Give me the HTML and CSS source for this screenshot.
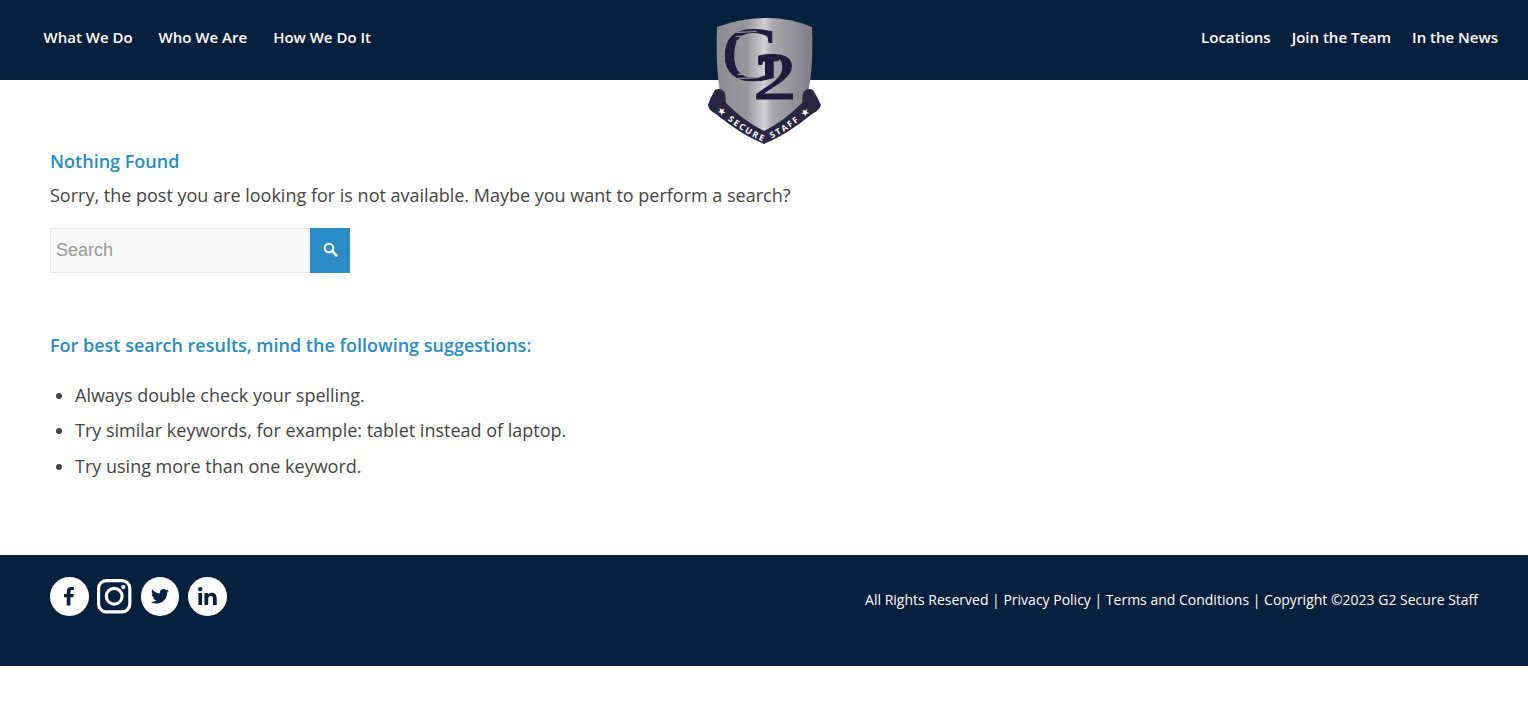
FILE: index.html
```html
<!DOCTYPE html>
<html lang="en">
<head>
<meta charset="utf-8">
<title>Nothing Found | G2 Secure Staff</title>
<link rel="stylesheet" href="styles.css">
</head>
<body>
<header class="site-header">
  <nav class="nav nav-left">
    <a href="#">What We Do</a>
    <a href="#">Who We Are</a>
    <a href="#">How We Do It</a>
  </nav>
  <nav class="nav nav-right">
    <a href="#">Locations</a>
    <a href="#">Join the Team</a>
    <a href="#">In the News</a>
  </nav>
  <a class="logo" href="#" aria-label="G2 Secure Staff">
    <svg width="120" height="134" viewBox="0 0 120 134">
      <defs>
        <linearGradient id="steel" x1="0" x2="1" y1="0" y2="0">
          <stop offset="0" stop-color="#8c8b91"/>
          <stop offset="0.32" stop-color="#98979c"/>
          <stop offset="0.5" stop-color="#d2d2d5"/>
          <stop offset="0.58" stop-color="#a9a8ad"/>
          <stop offset="1" stop-color="#7f7e85"/>
        </linearGradient>
        <pattern id="stripes-g" width="120" height="4.200" patternUnits="userSpaceOnUse" patternTransform="rotate(-3)">
          <rect width="120" height="4.200" fill="#1f1b3d"/>
          <rect x="15" y="3" width="20" height="1.200" fill="#96959b"/>
        </pattern>
        <pattern id="stripes-2" width="120" height="4.200" patternUnits="userSpaceOnUse" patternTransform="rotate(-3)">
          <rect width="120" height="4.200" fill="#1f1b3d"/>
          <rect x="74" y="3" width="24" height="1.200" fill="#a2a1a7"/>
        </pattern>
        <path id="arc" d="M12 96 Q36 118 60 128 Q84 118 108 96"/>
      </defs>
      <path fill="url(#steel)" d="M13 13 Q37 4 63 4 Q87 4 108 13 C109 40 108 60 104 78 Q98 100 60 124 Q22 100 16 78 C13 60 12 40 13 13 Z"/>
      <text class="logo-g" transform="translate(18 66) scale(1.060 1)" fill="url(#stripes-g)" stroke="url(#stripes-g)">G</text>
      <text class="logo-2" transform="translate(49 85) scale(1.300 1)" fill="url(#stripes-2)" stroke="url(#stripes-2)">2</text>
      <path class="ribbon" d="M11 76 Q17 73 21 79 L22 89 Q40 107 60 117 Q80 107 98 89 L99 79 Q103 73 109 76 Q114 84 117 91 Q115 97 108 100 Q84 120 60 130 Q36 120 12 100 Q5 97 4 91 Q6 84 11 76 Z"/>
      <text class="logo-type"><textPath href="#arc" startOffset="50%" text-anchor="middle">★ SECURE&#160;&#160;STAFF ★</textPath></text>
    </svg>
  </a>
</header>

<main class="content">
  <h1 class="title">Nothing Found</h1>
  <p class="lead">Sorry, the post you are looking for is not available. Maybe you want to perform a search?</p>
  <form class="search">
    <input class="search-input" type="text" placeholder="Search">
    <button class="search-btn" type="button" aria-label="Search">
      <svg width="15" height="15" viewBox="0 0 14 14"><circle cx="5.600" cy="5.600" r="4" fill="none" stroke="#fff" stroke-width="2"/><path d="M8.600 8.600 L12.600 12.600" stroke="#fff" stroke-width="2.400" stroke-linecap="round"/></svg>
    </button>
  </form>
  <h2 class="title suggestions">For best search results, mind the following suggestions:</h2>
  <ul class="tips">
    <li>Always double check your spelling.</li>
    <li>Try similar keywords, for example: tablet instead of laptop.</li>
    <li>Try using more than one keyword.</li>
  </ul>
</main>

<footer class="site-footer">
  <div class="social">
    <a class="round" href="#" aria-label="Facebook">
      <svg width="13" height="18.500" viewBox="0 0 14 20"><path fill="#05203d" d="M4 20 V11 H1 V7.600 H4 V5 C4 1.800 5.800 0 8.800 0 C10.200 0 11.200 .1 11.700 .2 V3.200 H9.900 C8.400 3.200 8 3.900 8 5.100 V7.600 H11.600 L11.100 11 H8 V20 Z"/></svg>
    </a>
    <a class="insta" href="#" aria-label="Instagram">
      <svg width="34.400" height="34.400" viewBox="0 0 35 35"><rect x="1.600" y="1.600" width="31.800" height="31.800" rx="8" fill="none" stroke="#fff" stroke-width="3.200"/><circle cx="17.500" cy="17.500" r="8" fill="none" stroke="#fff" stroke-width="3.200"/><circle cx="26.800" cy="8.200" r="2.200" fill="#fff"/></svg>
    </a>
    <a class="round" href="#" aria-label="Twitter">
      <svg width="18" height="15" viewBox="0 0 24 20"><path fill="#05203d" d="M24 2.400 C23.100 2.800 22.200 3.100 21.200 3.200 C22.200 2.600 23 1.600 23.400 .4 C22.400 1 21.400 1.400 20.200 1.700 C19.300 .7 18 0 16.600 0 C13.900 0 11.700 2.200 11.700 4.900 C11.700 5.300 11.700 5.700 11.800 6 C7.700 5.800 4.100 3.800 1.700 .8 C1.300 1.500 1 2.400 1 3.300 C1 5 1.900 6.500 3.200 7.400 C2.400 7.400 1.600 7.100 1 6.800 C1 9.200 2.700 11.200 4.900 11.600 C4.200 11.800 3.400 11.800 2.700 11.700 C3.300 13.700 5.100 15.100 7.300 15.100 C5.200 16.700 2.600 17.500 0 17.200 C2.200 18.600 4.800 19.400 7.500 19.400 C16.600 19.400 21.500 11.900 21.500 5.400 C21.500 5.200 21.500 5 21.500 4.800 C22.500 4.100 23.300 3.300 24 2.400 Z"/></svg>
    </a>
    <a class="round" href="#" aria-label="LinkedIn">
      <svg width="19" height="18" viewBox="0 0 20 19"><path fill="#05203d" d="M.4 6.300 H4.300 V19 H.4 Z M2.350 0 C3.600 0 4.600 1 4.600 2.250 C4.600 3.500 3.600 4.500 2.350 4.500 C1.100 4.500 .1 3.500 .1 2.250 C.1 1 1.100 0 2.350 0 Z M6.800 6.300 H10.500 V8 C11.100 7 12.400 6 14.400 6 C18.500 6 19.700 8.600 19.700 12 V19 H15.800 V12.800 C15.800 11.200 15.400 9.500 13.500 9.500 C11.600 9.500 10.700 10.900 10.700 12.700 V19 H6.800 Z"/></svg>
    </a>
  </div>
  <p class="legal">All Rights Reserved | Privacy Policy | Terms and Conditions | Copyright ©2023 G2 Secure Staff</p>
</footer>
</body>
</html>
```

FILE: styles.css
```css
* { box-sizing: border-box; }
html, body { margin: 0; padding: 0; }
body {
  background: #fff;
  color: #444;
  font-family: "Open Sans", sans-serif;
  height: 706px;
  overflow: hidden;
}
a { color: inherit; text-decoration: none; }

.site-header {
  position: relative;
  height: 80px;
  background: #05203d;
  display: flex;
  justify-content: space-between;
  align-items: flex-start;
  padding: 27px 30px 0 43.500px;
}
.nav {
  display: flex;
  color: #fff;
  font-size: 15px;
  font-weight: 580;
  line-height: 21px;
}
.nav-left { gap: 26px; }
.nav-right { gap: 21px; }
.logo {
  position: absolute;
  left: 704px;
  top: 14px;
  display: block;
  line-height: 0;
}
.logo svg { overflow: visible; }
.ribbon { fill: #2a2642; }
.logo-g { font-family: "Liberation Serif", serif; font-size: 77px; font-weight: 400; stroke-width: 1px; }
.logo-2 { font-family: "Liberation Serif", serif; font-size: 68px; font-weight: 400; stroke-width: 1px; }
.logo-type { font-family: "Open Sans", sans-serif; font-size: 8.500px; font-weight: 700; fill: #fff; letter-spacing: 1.900px; }

.content { padding: 0 50px; height: 475px; }
.title {
  margin: 0;
  color: #2a8bc5;
  font-size: 18px;
  font-weight: 600;
  line-height: 24px;
}
.content > .title:first-child { padding-top: 69px; box-sizing: content-box; }
.lead {
  margin: 10px 0 0;
  font-size: 18px;
  line-height: 24px;
}
.search { display: flex; margin-top: 21px; width: 300px; height: 45px; }
.search-input {
  flex: 1;
  min-width: 0;
  height: 45px;
  border: 1px solid #e8e8e8;
  border-right: 0;
  background: #f8f8f8;
  padding: 0 5px;
  font-family: "Liberation Sans", sans-serif;
  font-size: 18px;
  color: #444;
}
.search-input::placeholder { color: #999; opacity: 1; }
.search-btn {
  width: 40px;
  height: 45px;
  border: 0;
  padding: 0 0 3px;
  background: #2a8bc5;
  display: flex;
  align-items: center;
  justify-content: center;
}
.suggestions { margin-top: 60px; }
.tips {
  margin: 25.600px 0 0;
  padding: 0 0 0 25px;
  font-size: 18px;
  line-height: 24px;
}
.tips li + li { margin-top: 11.500px; }

.site-footer {
  height: 111px;
  background: #05203d;
  color: #fff;
  padding: 22px 50px 0;
  display: flex;
  justify-content: space-between;
  align-items: flex-start;
}
.social { display: flex; align-items: center; gap: 8.800px; }
.round {
  width: 38.700px;
  height: 38.700px;
  border-radius: 50%;
  background: #fff;
  display: flex;
  align-items: center;
  justify-content: center;
}
.insta { display: block; line-height: 0; }
.legal {
  margin: 13px 0 0;
  font-size: 14px;
  line-height: 20px;
}
```
